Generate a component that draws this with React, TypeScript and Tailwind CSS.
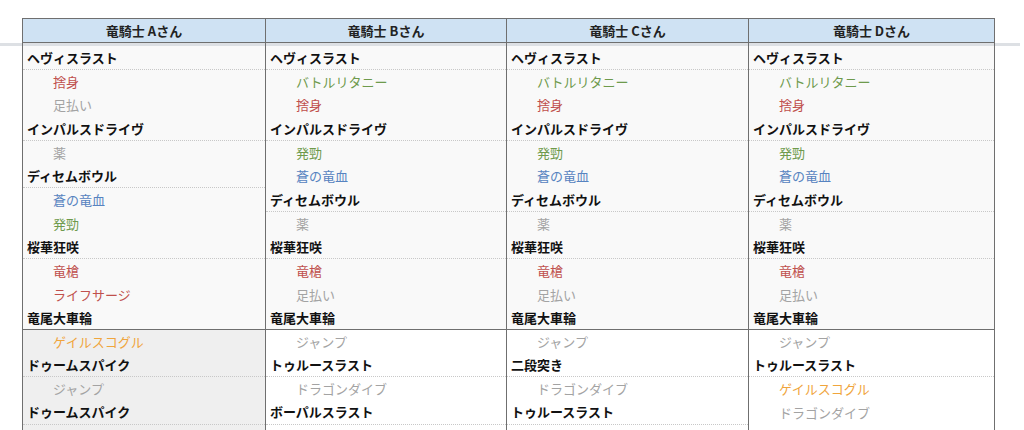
import React from "react";

type Kind = "b" | "r" | "g" | "gr" | "bl" | "o";
type Item = [string, Kind];

const colorOf: Record<Kind, string> = {
  b: "text-[#111111] font-bold pl-[4px]",
  r: "text-[#c0504d] pl-[30px]",
  g: "text-[#6e9a4c] pl-[30px]",
  gr: "text-[#a3a3a3] pl-[30px]",
  bl: "text-[#5783c0] pl-[30px]",
  o: "text-[#f0a53c] pl-[30px]",
};

const sec1B: Item[] = [
  ["ヘヴィスラスト", "b"],
  ["バトルリタニー", "g"],
  ["捨身", "r"],
  ["インパルスドライヴ", "b"],
  ["発勁", "g"],
  ["蒼の竜血", "bl"],
  ["ディセムボウル", "b"],
  ["薬", "gr"],
  ["桜華狂咲", "b"],
  ["竜槍", "r"],
  ["足払い", "gr"],
  ["竜尾大車輪", "b"],
];

const columns: { title: string; width: string; s1: Item[]; s2: Item[]; s2bg: string }[] = [
  {
    title: "竜騎士 Aさん",
    width: "w-[243px]",
    s1: [
      ["ヘヴィスラスト", "b"],
      ["捨身", "r"],
      ["足払い", "gr"],
      ["インパルスドライヴ", "b"],
      ["薬", "gr"],
      ["ディセムボウル", "b"],
      ["蒼の竜血", "bl"],
      ["発勁", "g"],
      ["桜華狂咲", "b"],
      ["竜槍", "r"],
      ["ライフサージ", "r"],
      ["竜尾大車輪", "b"],
    ],
    s2: [
      ["ゲイルスコグル", "o"],
      ["ドゥームスパイク", "b"],
      ["ジャンプ", "gr"],
      ["ドゥームスパイク", "b"],
    ],
    s2bg: "bg-[#efefef]",
  },
  {
    title: "竜騎士 Bさん",
    width: "w-[241px]",
    s1: sec1B,
    s2: [
      ["ジャンプ", "gr"],
      ["トゥルースラスト", "b"],
      ["ドラゴンダイブ", "gr"],
      ["ボーパルスラスト", "b"],
    ],
    s2bg: "bg-white",
  },
  {
    title: "竜騎士 Cさん",
    width: "w-[242px]",
    s1: sec1B,
    s2: [
      ["ジャンプ", "gr"],
      ["二段突き", "b"],
      ["ドラゴンダイブ", "gr"],
      ["トゥルースラスト", "b"],
    ],
    s2bg: "bg-white",
  },
  {
    title: "竜騎士 Dさん",
    width: "w-[247px]",
    s1: sec1B,
    s2: [
      ["ジャンプ", "gr"],
      ["トゥルースラスト", "b"],
      ["ゲイルスコグル", "o"],
      ["ドラゴンダイブ", "gr"],
    ],
    s2bg: "bg-white",
  },
];

function Row({ item, last }: { item: Item; last: boolean }) {
  const [text, kind] = item;
  let border = "";
  if (last) border = "border-b border-b-[#6f6f6f]";
  else if (kind === "b") border = "border-b border-dotted border-b-[#c8c8c8]";
  return (
    <div
      className={`h-[23.67px] shrink-0 flex items-center whitespace-nowrap text-[13px] ${colorOf[kind]} ${border}`}
    >
      {text}
    </div>
  );
}

export default function App() {
  return (
    <div
      className="w-[1024px] h-[430px] overflow-hidden bg-white pt-[18px]"
      style={{ fontFamily: '"Noto Sans CJK JP", "Noto Sans", sans-serif' }}
    >
      {/* header */}
      <div className="flex pl-[22px]">
        {columns.map((c, i) => (
          <div
            key={c.title}
            className={`${c.width} h-[25px] bg-[#cfe2f3] border-t border-b border-l border-[#6f6f6f] ${
              i === 3 ? "border-r" : ""
            } flex items-center justify-center text-[13px] font-bold text-[#222222]`}
          >
            {c.title}
          </div>
        ))}
      </div>
      {/* strip */}
      <div className="flex h-[3px]">
        <div className="w-[22px] bg-[#dde0e4]" />
        {columns.map((c, i) => (
          <div
            key={c.title}
            className={`${c.width} bg-[#dde0e4] border-l border-[#6f6f6f] ${i === 3 ? "border-r" : ""}`}
          />
        ))}
        <div className="w-[25px] bg-[#dde0e4]" />
      </div>
      {/* body */}
      <div className="flex pl-[22px]">
        {columns.map((c, i) => (
          <div
            key={c.title}
            className={`${c.width} h-[400px] flex flex-col border-l border-[#6f6f6f] ${i === 3 ? "border-r" : ""} ${c.s2bg}`}
          >
            <div className="flex flex-col bg-[#f9f9f9]">
              {c.s1.map((it, j) => (
                <Row key={j} item={it} last={j === c.s1.length - 1} />
              ))}
            </div>
            <div className="flex flex-col">
              {c.s2.map((it, j) => (
                <Row key={j} item={it} last={false} />
              ))}
            </div>
          </div>
        ))}
      </div>
    </div>
  );
}
